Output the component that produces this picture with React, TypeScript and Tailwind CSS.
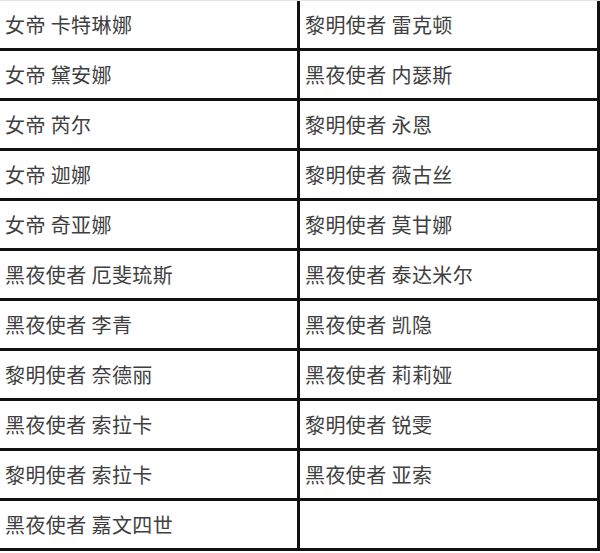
const rows: [string, string][] = [
  ['女帝 卡特琳娜', '黎明使者 雷克顿'],
  ['女帝 黛安娜', '黑夜使者 内瑟斯'],
  ['女帝 芮尔', '黎明使者 永恩'],
  ['女帝 迦娜', '黎明使者 薇古丝'],
  ['女帝 奇亚娜', '黎明使者 莫甘娜'],
  ['黑夜使者 厄斐琉斯', '黑夜使者 泰达米尔'],
  ['黑夜使者 李青', '黑夜使者 凯隐'],
  ['黎明使者 奈德丽', '黑夜使者 莉莉娅'],
  ['黑夜使者 索拉卡', '黎明使者 锐雯'],
  ['黎明使者 索拉卡', '黑夜使者 亚索'],
  ['黑夜使者 嘉文四世', ''],
];

const App = () => {
  return (
    <div className="w-[600px] h-[553px] bg-white border-t border-[#e2e2e2] font-['Noto_Sans_CJK_SC',sans-serif] text-[20px] tracking-[0.4px] text-[#404040]">
      {rows.map(([left, right], i) => (
        <div key={i} className="flex h-[50px] border-b-[3px] border-[#111]">
          <div className="w-[300px] flex items-center pl-[5px] border-r-[3px] border-[#111]">
            {left}
          </div>
          <div className="w-[300px] flex items-center pl-[5px] border-r-[3px] border-[#111]">
            {right}
          </div>
        </div>
      ))}
    </div>
  );
};

export default App;
